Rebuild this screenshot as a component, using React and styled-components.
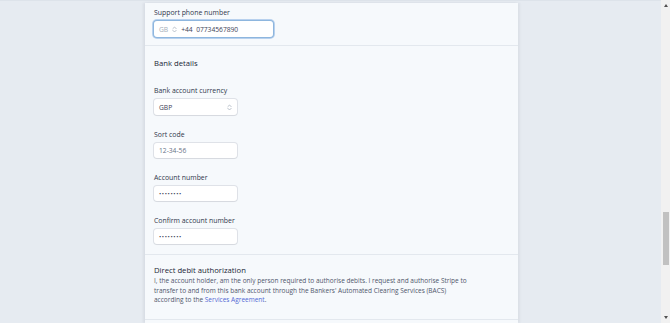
import React from 'react';
import styled, { createGlobalStyle } from 'styled-components';

const GlobalStyle = createGlobalStyle`
  html, body {
    margin: 0;
    padding: 0;
    overflow: hidden;
  }
  body {
    font-family: "Open Sans", "Noto Sans", Arial, sans-serif;
    color: #3c4257;
  }
`;

const Screen = styled.div`
  display: flex;
  width: 670px;
  height: 323px;
  overflow: hidden;
  background: #e6ebf1;
`;

const Canvas = styled.div`
  flex: 1;
  padding: 2px 0 0 145px;
  border-top: 1px solid #dde3ea;
  box-sizing: border-box;
`;

const Panel = styled.div`
  width: 373px;
  background: #f6f9fc;
  box-shadow: -2px 0 2px rgba(60, 66, 87, 0.08), 2px 0 2px rgba(60, 66, 87, 0.06);
  height: 100%;
`;

const Section = styled.section`
  padding: ${(p) => p.$pad || '8px 9px 9px'};
  border-bottom: 1px solid #e3e8ee;
`;

const Heading = styled.h2`
  margin: 0 0 ${(p) => p.$gap || '0'};
  font-size: 7.7px;
  line-height: ${(p) => p.$lh || '14px'};
  font-weight: 500;
  color: #1a1f36;
`;

const Field = styled.div`
  display: flex;
  flex-direction: column;
  align-items: flex-start;
  margin-bottom: 14px;

  &:last-child {
    margin-bottom: 0;
  }
`;

const Label = styled.label`
  font-size: 6.9px;
  line-height: 12px;
  font-weight: 500;
  color: #30364b;
  margin-bottom: 2px;
`;

const Input = styled.div`
  display: flex;
  align-items: center;
  gap: 4px;
  width: ${(p) => p.$w || '83px'};
  height: ${(p) => p.$h || 15}px;
  padding: 0 5px;
  box-sizing: border-box;
  background: #fff;
  border-radius: 3px;
  font-size: 6.7px;
  color: ${(p) => (p.$muted ? '#697386' : '#3c4257')};
  box-shadow: ${(p) =>
    p.$focus
      ? '0 0 0 1px #8eb6de, 0 0 0 2px rgba(122, 169, 224, 0.5)'
      : '0 0 0 1px rgba(60, 66, 87, 0.12), 0 1px 1px rgba(0, 0, 0, 0.04)'};
`;

const Grow = styled.span`
  flex: 1;
`;

const Country = styled.span`
  color: #a3acb9;
`;

const Dots = styled.span`
  letter-spacing: 0.6px;
  font-size: 6px;
  color: #3c4257;
`;

const Para = styled.p`
  margin: 0;
  font-size: 6.5px;
  line-height: 9.7px;
  color: #4f566b;
`;

const Link = styled.a`
  color: #5469d4;
  font-weight: 500;
  text-decoration: none;
`;

const Scrollbar = styled.div`
  width: 9px;
  background: #f1f1f1;
  display: flex;
  flex-direction: column;
  align-items: center;
  justify-content: space-between;
  padding: 4px 0;
  box-sizing: border-box;
`;

const Track = styled.div`
  flex: 1;
  width: 100%;
  display: flex;
  flex-direction: column;
  padding-top: ${(p) => p.$offset}px;
`;

const Thumb = styled.div`
  width: 6px;
  margin: 0 auto;
  height: 53px;
  background: #c1c1c1;
`;

const Arrow = styled.div`
  width: 0;
  height: 0;
  border-left: 2.5px solid transparent;
  border-right: 2.5px solid transparent;
  ${(p) => (p.$down ? 'border-top: 3px solid #505050;' : 'border-bottom: 3px solid #505050;')}
`;

function Chevrons() {
  return (
    <svg width="5" height="7" viewBox="0 0 6 8" fill="none" stroke="#a3acb9" strokeWidth="0.9" strokeLinecap="round" strokeLinejoin="round">
      <path d="M1 3 L3 1 L5 3" />
      <path d="M1 5 L3 7 L5 5" />
    </svg>
  );
}

export default function App() {
  return (
    <>
      <GlobalStyle />
      <Screen>
        <Canvas>
          <Panel>
            <Section $pad="4px 9px 8px">
              <Field>
                <Label>Support phone number</Label>
                <Input $w="119px" $h={16} $focus>
                  <Country>GB</Country>
                  <Chevrons />
                  <span>+44&nbsp; 07734567890</span>
                </Input>
              </Field>
            </Section>
            <Section $pad="10px 9px 10px">
              <Heading $gap="15px">Bank details</Heading>
              <Field>
                <Label>Bank account currency</Label>
                <Input $h={16}>
                  <Grow>GBP</Grow>
                  <Chevrons />
                </Input>
              </Field>
              <Field>
                <Label>Sort code</Label>
                <Input $muted>12-34-56</Input>
              </Field>
              <Field>
                <Label>Account number</Label>
                <Input>
                  <Dots>••••••••</Dots>
                </Input>
              </Field>
              <Field>
                <Label>Confirm account number</Label>
                <Input>
                  <Dots>••••••••</Dots>
                </Input>
              </Field>
            </Section>
            <Section $pad="9px 9px 14px">
              <Heading $lh="12px">Direct debit authorization</Heading>
              <Para>
                I, the account holder, am the only person required to authorise debits. I request and authorise Stripe to
                <br />
                transfer to and from this bank account through the Bankers' Automated Clearing Services (BACS)
                <br />
                according to the <Link href="#">Services Agreement</Link>.
              </Para>
            </Section>
          </Panel>
        </Canvas>
        <Scrollbar>
          <Arrow />
          <Track $offset={205}>
            <Thumb />
          </Track>
          <Arrow $down />
        </Scrollbar>
      </Screen>
    </>
  );
}
